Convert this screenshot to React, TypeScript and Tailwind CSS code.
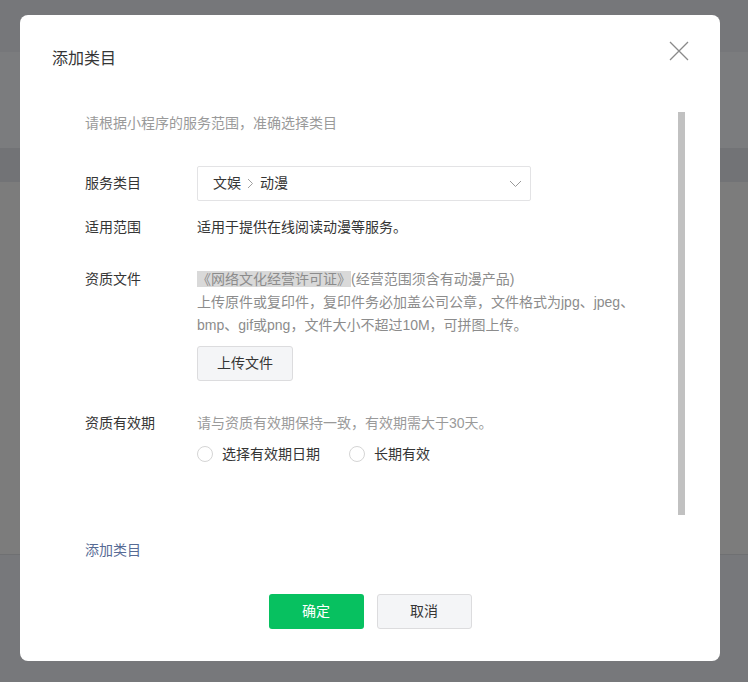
import React from "react";

const font = { fontFamily: '"Liberation Sans", "Noto Sans CJK SC", "Noto Sans", sans-serif' };

function Row({ label, children, center = false }: { label: string; children: React.ReactNode; center?: boolean }) {
  return (
    <div className={`flex ${center ? "items-center" : "items-start"}`}>
      <div className="w-[112px] shrink-0 text-[14px] leading-[23px] text-[#353535]">{label}</div>
      <div className="flex-1">{children}</div>
    </div>
  );
}

function Radio({ label }: { label: string }) {
  return (
    <label className="flex items-center gap-[9px]">
      <span className="block h-[16px] w-[16px] rounded-full border border-[#d5d5d5] bg-white" />
      <span className="text-[14px] leading-[22px] text-[#353535]">{label}</span>
    </label>
  );
}

export default function App() {
  return (
    <div className="relative h-[682px] w-[748px] overflow-hidden bg-[#7b7c7e]" style={font}>
      {/* background bands */}
      <div className="absolute inset-0 flex flex-col">
        <div className="h-[52px] bg-[#76777a]" />
        <div className="h-[96px] bg-[#7b7c7e]" />
        <div className="h-[34px] bg-[#727376]" />
        <div className="h-[373px] bg-[#7c7c7c] border-b border-[#6f7072]" />
        <div className="flex-1 bg-[#77787b]" />
      </div>

      <div className="relative ml-[20px] mt-[15px] flex h-[646px] w-[700px] flex-col rounded-[8px] bg-white pl-[32px] pr-[35px] pt-[32px] pb-[32px]">
        <button className="absolute right-[31px] top-[26px] h-[20px] w-[20px]" aria-label="close">
          <svg viewBox="0 0 20 20" width="20" height="20">
            <path d="M1 1 L19 19 M19 1 L1 19" stroke="#8a8a8a" strokeWidth="1.3" fill="none" />
          </svg>
        </button>

        <div className="text-[16px] leading-[24px] text-[#353535]">添加类目</div>

        <div className="mt-[41px] flex h-[403px]">
          <div className="flex-1 pl-[33px]">
            <div className="text-[14px] leading-[22px] text-[#9a9a9a]">请根据小程序的服务范围，准确选择类目</div>

            <div className="mt-[32px]">
              <Row label="服务类目" center>
                <div className="flex h-[35px] w-[334px] items-center justify-between rounded-[2px] border border-[#e3e3e5] pl-[15px] pr-[8px]">
                  <div className="flex items-center text-[14px] text-[#353535]">
                    <span>文娱</span>
                    <svg className="mx-[6px]" width="7" height="11" viewBox="0 0 7 11">
                      <path d="M1 1 L5.5 5.5 L1 10" stroke="#a0a0a0" strokeWidth="1" fill="none" />
                    </svg>
                    <span>动漫</span>
                  </div>
                  <svg width="13" height="8" viewBox="0 0 13 8">
                    <path d="M1 1 L6.5 6.5 L12 1" stroke="#9a9a9a" strokeWidth="1" fill="none" />
                  </svg>
                </div>
              </Row>
            </div>

            <div className="mt-[15px]">
              <Row label="适用范围">
                <div className="text-[14px] leading-[23px] text-[#353535]">适用于提供在线阅读动漫等服务。</div>
              </Row>
            </div>

            <div className="mt-[29px]">
              <Row label="资质文件">
                <div className="w-[450px] text-[14px] leading-[23px] text-[#8c8c8c]">
                  <span className="bg-[#d9d9d9]">《网络文化经营许可证》</span>
                  <span>(经营范围须含有动漫产品)</span>
                  <br />
                  上传原件或复印件，复印件务必加盖公司公章，文件格式为jpg、jpeg、bmp、gif或png，文件大小不超过10M，可拼图上传。
                </div>
                <button className="mt-[9px] flex h-[35px] w-[96px] items-center justify-center rounded-[3px] border border-[#dcdcde] bg-[#f4f5f7] text-[14px] text-[#353535]">
                  上传文件
                </button>
              </Row>
            </div>

            <div className="mt-[31px]">
              <Row label="资质有效期">
                <div className="text-[14px] leading-[23px] text-[#9a9a9a]">请与资质有效期保持一致，有效期需大于30天。</div>
                <div className="mt-[8px] flex items-center gap-[29px]">
                  <Radio label="选择有效期日期" />
                  <Radio label="长期有效" />
                </div>
              </Row>
            </div>
          </div>
          <div className="w-[7px] shrink-0 bg-[#c1c1c1]" />
        </div>

        <div className="mt-[24px] pl-[33px] text-[14px] leading-[22px] text-[#576b95]">添加类目</div>

        <div className="mt-auto flex justify-center gap-[13px] pl-[3px]">
          <button className="flex h-[35px] w-[95px] items-center justify-center rounded-[3px] bg-[#07c160] text-[14px] text-white">
            确定
          </button>
          <button className="flex h-[35px] w-[95px] items-center justify-center rounded-[3px] border border-[#dcdcde] bg-[#f4f5f7] text-[14px] text-[#353535]">
            取消
          </button>
        </div>
      </div>
    </div>
  );
}
